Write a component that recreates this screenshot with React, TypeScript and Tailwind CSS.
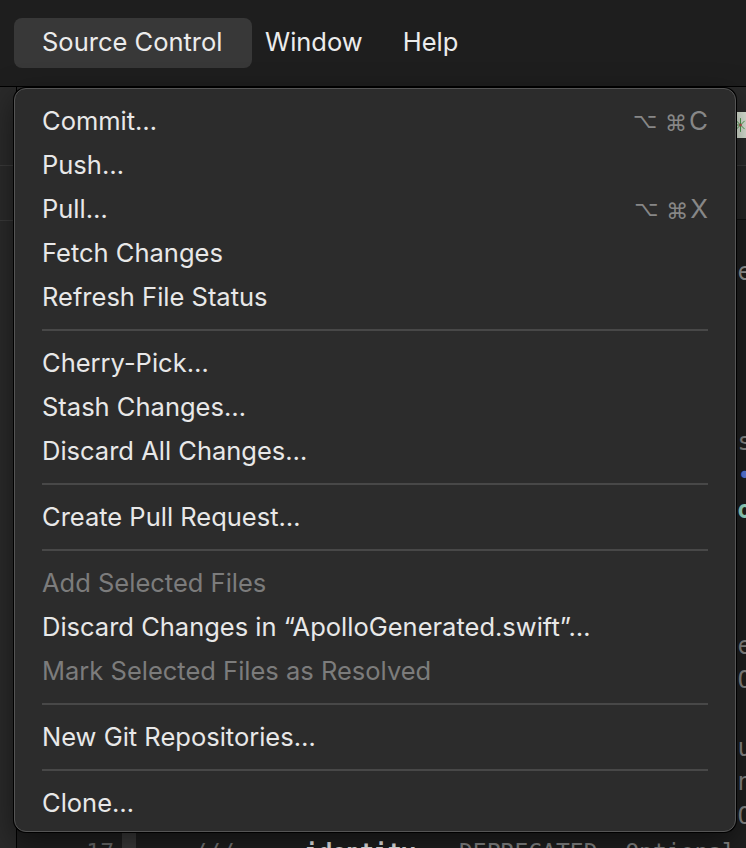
import React from "react";

type Item =
  | { kind: "item"; label: string; shortcut?: string[]; disabled?: boolean }
  | { kind: "sep" };

const items: Item[] = [
  { kind: "item", label: "Commit…", shortcut: ["⌥", "⌘", "C"] },
  { kind: "item", label: "Push…" },
  { kind: "item", label: "Pull…", shortcut: ["⌥", "⌘", "X"] },
  { kind: "item", label: "Fetch Changes" },
  { kind: "item", label: "Refresh File Status" },
  { kind: "sep" },
  { kind: "item", label: "Cherry-Pick…" },
  { kind: "item", label: "Stash Changes…" },
  { kind: "item", label: "Discard All Changes…" },
  { kind: "sep" },
  { kind: "item", label: "Create Pull Request…" },
  { kind: "sep" },
  { kind: "item", label: "Add Selected Files", disabled: true },
  { kind: "item", label: "Discard Changes in “ApolloGenerated.swift”…" },
  { kind: "item", label: "Mark Selected Files as Resolved", disabled: true },
  { kind: "sep" },
  { kind: "item", label: "New Git Repositories…" },
  { kind: "sep" },
  { kind: "item", label: "Clone…" },
];

const edgeChars: { ch: string; cls: string }[] = [
  { ch: "e", cls: "text-[#9a9a9a]" },
  { ch: "", cls: "" },
  { ch: "", cls: "" },
  { ch: "", cls: "" },
  { ch: "", cls: "" },
  { ch: "s", cls: "text-[#8a8a8a]" },
  { ch: "•", cls: "text-[#5b7be0]" },
  { ch: "o", cls: "text-[#9fe3cf] font-bold" },
  { ch: "", cls: "" },
  { ch: "", cls: "" },
  { ch: "", cls: "" },
  { ch: "e", cls: "text-[#8a8a8a]" },
  { ch: "O", cls: "text-[#8a8a8a]" },
  { ch: "", cls: "" },
  { ch: "u", cls: "text-[#8a8a8a]" },
  { ch: "n", cls: "text-[#8a8a8a]" },
  { ch: "O", cls: "text-[#8a8a8a]" },
];

export default function App() {
  return (
    <div className="relative w-[746px] h-[848px] overflow-hidden bg-[#1e1e1e] font-['Inter','Noto_Sans',sans-serif] antialiased">
      {/* menu bar */}
      <header className="h-[86px] flex items-center bg-[#1e1e1e] text-[25.5px] text-[#ececec]">
        <div className="ml-[14px] h-[50px] w-[238px] rounded-[8px] bg-[#383838] flex items-center pl-[28px] -mt-[1px]">
          Source Control
        </div>
        <div className="ml-[13px] -mt-[1px]">Window</div>
        <div className="ml-[40px] -mt-[1px]">Help</div>
      </header>
      <div className="h-[1px] bg-black" />

      {/* background workspace */}
      <div className="flex h-[761px] overflow-hidden">
        <div className="w-[17px] shrink-0 flex flex-col bg-[#2a2a2a] border-r border-black">
          <div className="h-[78px] shrink-0" />
          <div className="h-px shrink-0 bg-[#3a3a3a]" />
          <div className="h-[54px] shrink-0" />
          <div className="h-px shrink-0 bg-[#3a3a3a]" />
        </div>
        <div className="flex-1 flex flex-col overflow-hidden">
          <div className="h-[78px] shrink-0 bg-[#2a2a2a] flex justify-end items-start pt-[25px]">
            <div className="w-[12px] h-[26px] bg-[#dfe8da] flex items-center justify-start overflow-hidden">
              <svg width="16" height="26" viewBox="0 0 16 26" className="ml-[1px]">
                <g stroke="#4a9a4a" strokeWidth="1.4" fill="none">
                  <path d="M8 13 L1 6 M8 13 L1 20 M8 13 L0 13 M8 13 L8 3 M8 13 L8 23 M8 13 L14 7 M8 13 L14 19" />
                </g>
                <circle cx="8" cy="13" r="2" fill="#c05050" />
              </svg>
            </div>
          </div>
          <div className="h-px shrink-0 bg-[#3a3a3a]" />
          <div className="h-[53px] shrink-0 bg-[#262626]" />
          <div className="h-px shrink-0 bg-[#111]" />
          <div className="flex-1 bg-[#1f1f1f] flex flex-col pt-[35px] text-[24px] font-['DejaVu_Sans_Mono',monospace] leading-[34px] overflow-hidden">
            {edgeChars.map((e, i) => (
              <div key={i} className="h-[34px] shrink-0 flex justify-end">
                <span className={`${e.cls} mr-[-6px]`}>{e.ch}</span>
              </div>
            ))}
            <div className="flex items-start shrink-0 h-[40px] text-[23px] leading-[34px]">
              <div className="w-[97px] shrink-0 text-right text-[#6d6d6d] pt-[2px]">17</div>
              <div className="ml-[8px] shrink-0 w-[14px] h-[40px] bg-[#3b3b3b]" />
              <div className="ml-[57px] shrink-0 text-[#7a7a7a] pt-[2px]">///</div>
              <div className="ml-[70px] shrink-0 text-[#f0f0f0] font-bold pt-[2px]">identity</div>
              <div className="ml-[16px] text-[#8a8a8a] whitespace-nowrap pt-[2px]">- DEPRECATED: Optional C</div>
            </div>
          </div>
        </div>
      </div>

      {/* dropdown menu */}
      <div className="absolute left-[14px] top-[88px] w-[722px] h-[744px] rounded-[12px] bg-[#2c2c2c] border border-[#555555] shadow-[0_0_0_1px_#000,0_10px_30px_rgba(0,0,0,0.5)] pt-[10px] pb-[6px] px-[27px] flex flex-col text-[25.5px]">
        {items.map((it, i) =>
          it.kind === "sep" ? (
            <div key={i} className="h-[22px] shrink-0 flex items-center">
              <div className="h-[2px] w-full bg-[#484848]" />
            </div>
          ) : (
            <div
              key={i}
              className={`h-[44px] shrink-0 flex items-center justify-between whitespace-nowrap ${
                it.disabled ? "text-[#7c7c7c]" : "text-[#e8e8e8]"
              }`}
            >
              <span>{it.label}</span>
              {it.shortcut && (
                <span className="flex items-center text-[#878787] font-['DejaVu_Sans','Inter',sans-serif] text-[21px] leading-none">
                  <span className="mr-[8px]">{it.shortcut[0]}</span>
                  <span className="mr-[2px] translate-y-[3px] text-[22px]">{it.shortcut[1]}</span>
                  <span className="font-['Inter',sans-serif] text-[26px]">{it.shortcut[2]}</span>
                </span>
              )}
            </div>
          )
        )}
      </div>
    </div>
  );
}
